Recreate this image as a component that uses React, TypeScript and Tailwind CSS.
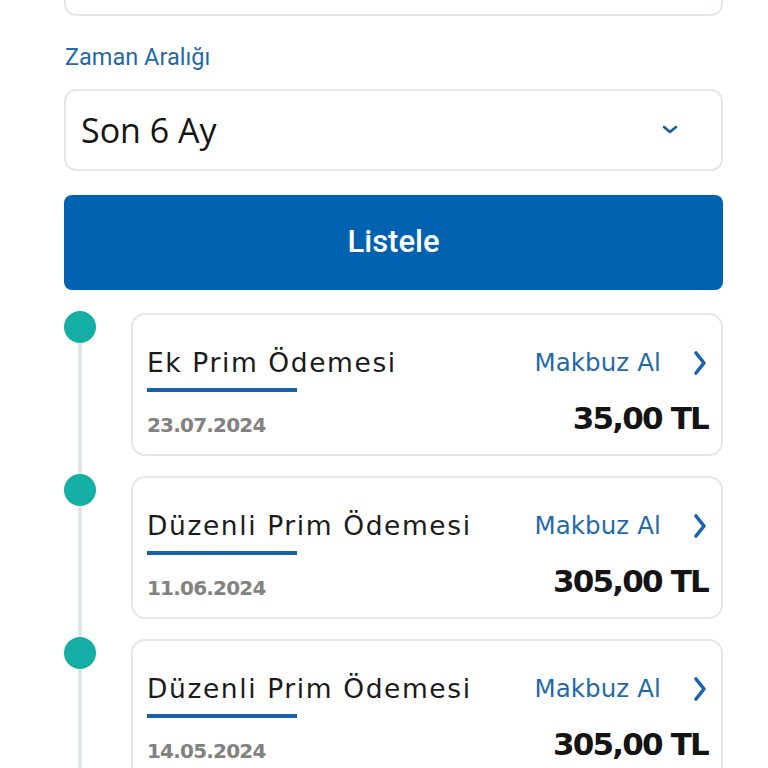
import React from 'react';

interface Payment {
  title: string;
  date: string;
  amount: string;
}

const PAYMENTS: Payment[] = [
  { title: 'Ek Prim Ödemesi', date: '23.07.2024', amount: '35,00 TL' },
  { title: 'Düzenli Prim Ödemesi', date: '11.06.2024', amount: '305,00 TL' },
  { title: 'Düzenli Prim Ödemesi', date: '14.05.2024', amount: '305,00 TL' },
];

const cardFont = { fontFamily: '"DejaVu Sans", "Open Sans", sans-serif' };

const PaymentRow: React.FC<{ p: Payment }> = ({ p }) => (
  <div className="flex">
    {/* timeline column */}
    <div className="flex w-[67px] shrink-0 flex-col">
      <div className="h-8 w-8 rounded-full bg-[#14aea4]" />
      <div className="ml-[14px] w-1 flex-1 bg-[#e1e6ea]" />
    </div>
    <div className="flex-1 pb-[18px] pt-[2px]">
      <div
        className="h-[143px] rounded-[14px] border-2 border-[#e3e7ea] bg-white pl-[14px] pr-[13px] pt-[28px]"
        style={cardFont}
      >
        <div className="flex h-[40px] items-center justify-between">
          <span className="text-[26.5px] tracking-[1.6px] text-[#1b1b1b]">{p.title}</span>
          <div className="flex items-center">
            <span className="text-[24.5px] tracking-[0.1px] text-[#1f6aa7]">Makbuz Al</span>
            <svg width="16" height="26" viewBox="0 0 16 26" className="ml-[31px]">
              <path d="M4 3 L12 13 L4 23" fill="none" stroke="#1a63ae" strokeWidth="3.6" strokeLinecap="round" strokeLinejoin="round" />
            </svg>
          </div>
        </div>
        <div className="mt-[5px] h-1 w-[150px] bg-[#1861a8]" />
        <div className="flex items-start justify-between">
          <span className="mt-[22px] text-[20px] leading-[23px] font-semibold tracking-[-0.8px] text-[#828282]">{p.date}</span>
          <span className="mt-[8px] text-[31px] leading-[36px] font-bold tracking-[-1.8px] text-[#141414]">{p.amount}</span>
        </div>
      </div>
    </div>
  </div>
);

export default function App() {
  return (
    <div className="h-[768px] w-[768px] overflow-hidden bg-white pl-[64px] pr-[45px]">
      {/* previous field, scrolled mostly out of view */}
      <div className="-mt-[64px] h-[80px] rounded-[12px] border-2 border-[#e3e7ea] bg-white" />

      <div
        className="mt-[27px] pl-[1px] text-[23.5px] leading-[28px] text-[#1f6aa7]"
        style={{ fontFamily: 'Roboto, sans-serif' }}
      >
        Zaman Aralığı
      </div>

      <div className="mt-[18px] flex h-[82px] items-center justify-between rounded-[12px] border-2 border-[#e3e7ea] bg-white pl-[15px] pr-[42px]">
        <span className="text-[34px] text-[#151515]" style={{ fontFamily: '"Open Sans", sans-serif' }}>
          Son 6 Ay
        </span>
        <svg width="18" height="10" viewBox="0 0 18 10">
          <path d="M3 2 L9 7 L15 2" fill="none" stroke="#1a5c9c" strokeWidth="2.6" strokeLinecap="round" strokeLinejoin="round" />
        </svg>
      </div>

      <button
        className="mt-[24px] flex h-[95px] w-full items-center justify-center rounded-[8px] bg-[#0062b0] text-[31px] font-medium text-white"
        style={{ fontFamily: 'Roboto, sans-serif' }}
      >
        Listele
      </button>

      <div className="mt-[21px]">
        {PAYMENTS.map((p, i) => (
          <PaymentRow key={i} p={p} />
        ))}
      </div>
    </div>
  );
}
